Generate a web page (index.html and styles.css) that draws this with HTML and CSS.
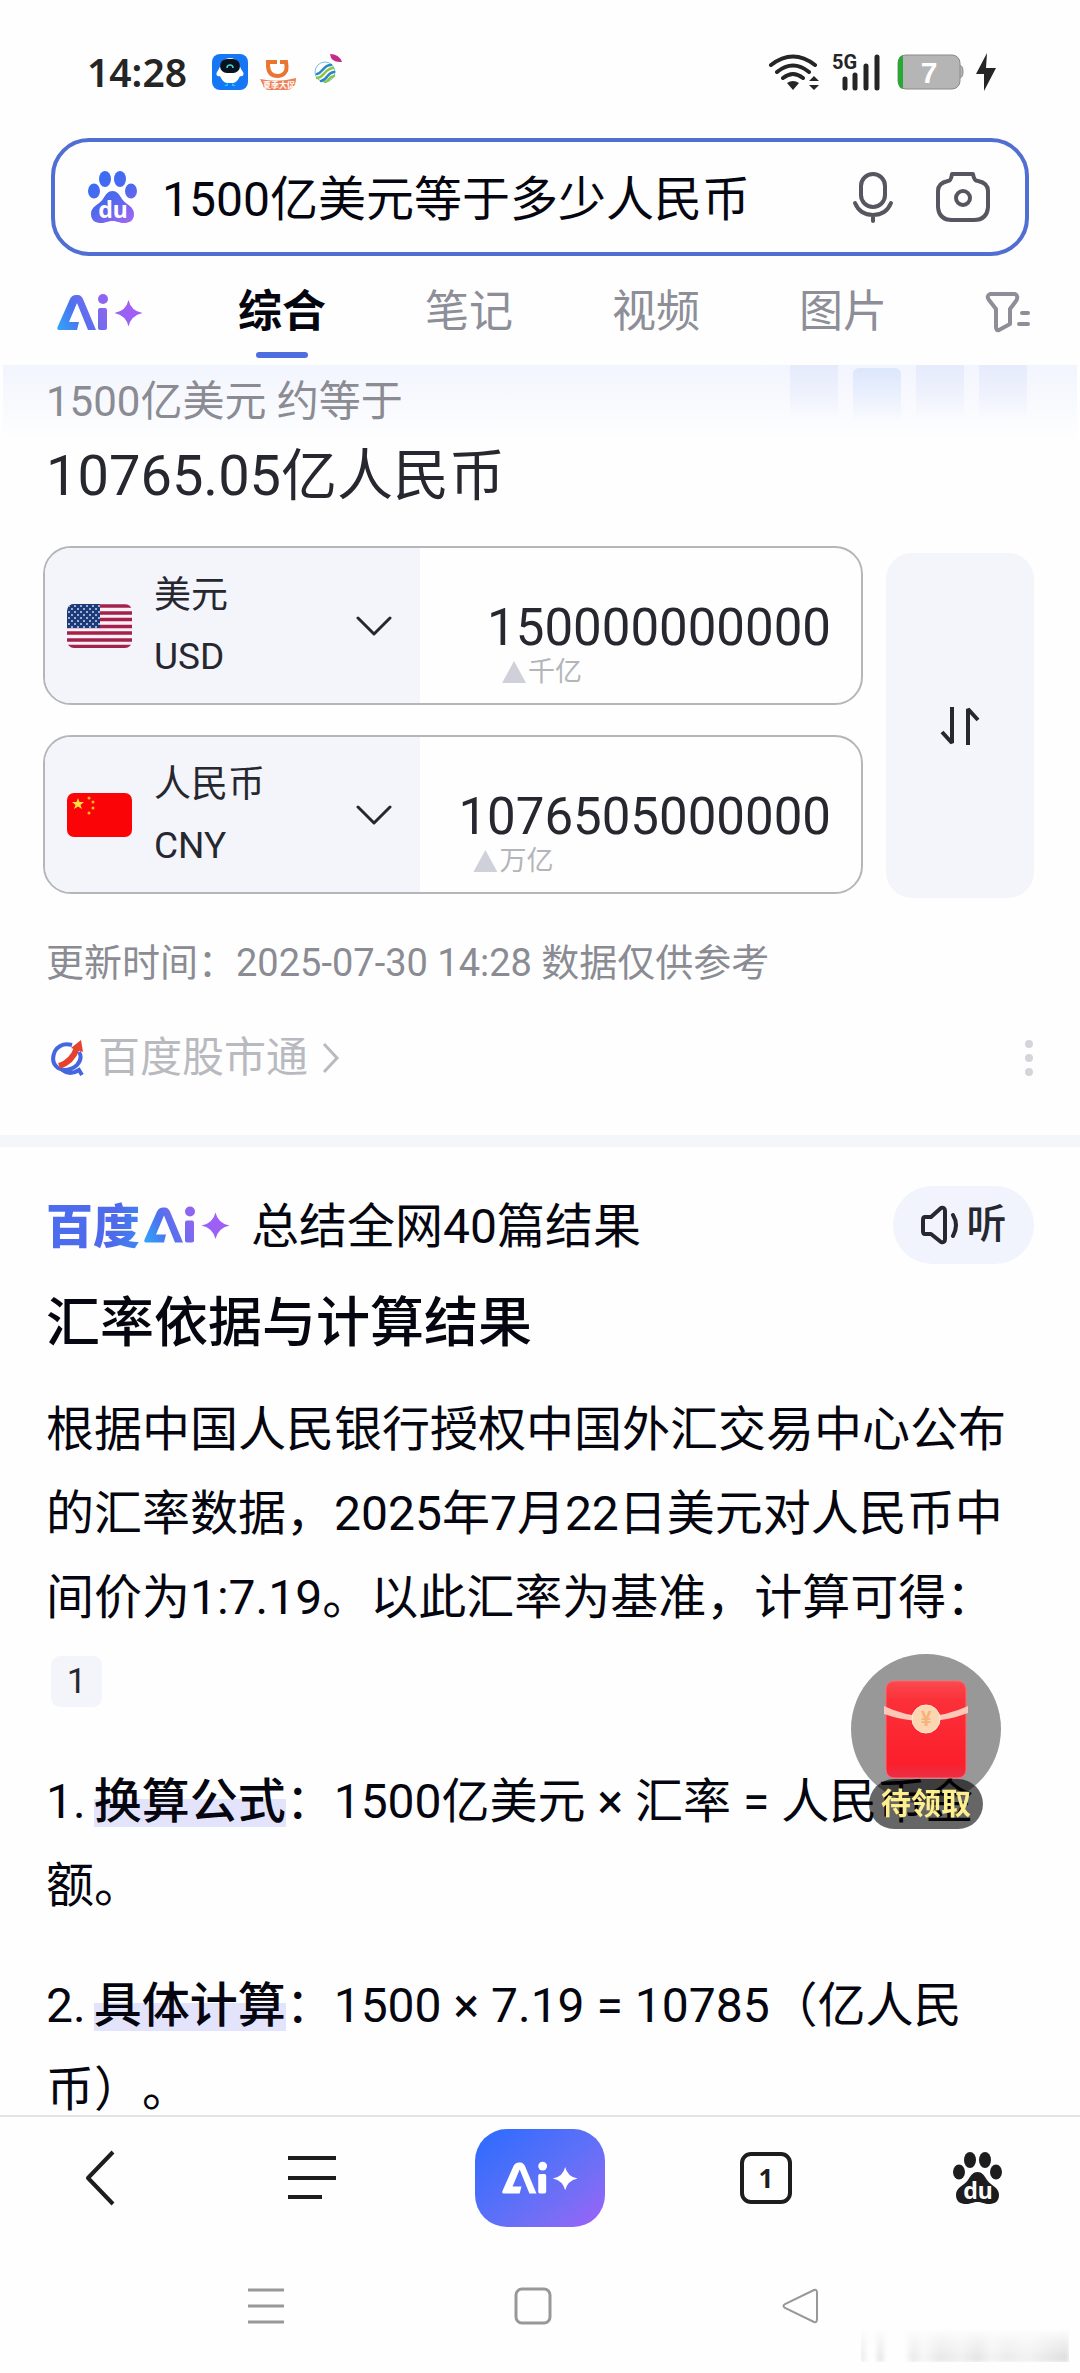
FILE: index.html
```html
<!DOCTYPE html>
<html lang="zh-CN">
<head>
<meta charset="utf-8">
<meta name="viewport" content="width=device-width, initial-scale=1">
<title>1500亿美元等于多少人民币</title>
<link rel="stylesheet" href="styles.css">
</head>
<body>
<svg class="defs" aria-hidden="true">
  <defs>
    <linearGradient id="brand" gradientUnits="userSpaceOnUse" x1="0" y1="36" x2="70" y2="0">
      <stop offset="0" stop-color="#2fa8fb"/><stop offset=".3" stop-color="#4c72ee"/><stop offset=".65" stop-color="#8a67ee"/><stop offset="1" stop-color="#a45df8"/>
    </linearGradient>
    <linearGradient id="pawFill" gradientUnits="userSpaceOnUse" x1="10" y1="5" x2="40" y2="52">
      <stop offset="0" stop-color="#3a6cf5"/><stop offset=".5" stop-color="#5068ec"/><stop offset="1" stop-color="#a066f5"/>
    </linearGradient>
    <symbol id="ai" viewBox="0 0 86 37">
      <path d="M2 36Q-1 36 1 32L13 5Q15 1 19 1H21Q24 1 26 5L39 36H31L20 9L12 28H22L20 36Z"/>
      <circle cx="46" cy="5" r="5"/><rect x="41" y="14" width="9" height="22" rx="2"/>
      <path d="M71.500 6Q74 17 85.500 19Q74 21.500 71.500 32.500Q69 21.500 57.500 19Q69 17 71.500 6Z"/>
    </symbol>
    <symbol id="paw" viewBox="0 0 50 52">
      <ellipse cx="6" cy="20" rx="6" ry="7.500"/><ellipse cx="17" cy="8" rx="6" ry="8"/>
      <ellipse cx="32" cy="8" rx="6" ry="8"/><ellipse cx="43" cy="20" rx="6" ry="7.500"/>
      <path d="M24.500 20C29 20 31 23 34 28C38 34 46 35 46 43C46 50 41 52 36 52C31 52 29 50 24.500 50C20 50 18 52 13 52C8 52 3 50 3 43C3 35 11 34 15 28C18 23 20 20 24.500 20Z"/>
      <text class="du" x="25" y="47" text-anchor="middle">du</text>
    </symbol>
    <pattern id="stars" width="6" height="6" patternUnits="userSpaceOnUse">
      <circle cx="2" cy="2" r="1" fill="#c9d6f2"/><circle cx="5" cy="5" r="1" fill="#c9d6f2"/>
    </pattern>
    <linearGradient id="packet" x1="0" y1="0" x2="0" y2="1">
      <stop offset="0" stop-color="#fb4a50"/><stop offset=".2" stop-color="#fb3038"/><stop offset=".85" stop-color="#fb1f2c"/><stop offset="1" stop-color="#e92f48"/>
    </linearGradient>
  </defs>
</svg>

<header>
  <div class="status">
    <time class="clock">14:28</time>
    <svg class="app" viewBox="0 0 36 36" aria-hidden="true"><rect width="36" height="36" rx="8" fill="#1677f5"/><path d="M18 4C27 4 27 13 31 18C33 22 29 23 28 22C25 29 22 29 18 29C14 29 11 29 8 22C7 23 3 22 5 18C9 13 9 4 18 4Z" fill="#fff"/><rect x="8" y="5" width="20" height="14" rx="7" fill="#09121f"/><path d="M15 14A3 3 0 0 1 21 14" fill="none" stroke="#3fd8d0" stroke-width="1.500"/><path d="M12 32L16 29V32ZM24 32L20 29V32Z" fill="#18c8f8"/></svg>
    <svg class="app" viewBox="0 0 36 36" aria-hidden="true"><path d="M8 8H26Q27 14 26 17Q23 22 18 22Q8 22 8 11Z" fill="none" stroke="#ea7430" stroke-width="4"/><rect x="17" y="6" width="3" height="6" fill="#fff"/><path d="M0 25Q18 29 36 24Q36 36 26 36H10Q3 36 3 31Z" fill="#ee8359"/><text class="app-label" x="19" y="34" text-anchor="middle">夏季大促</text></svg>
    <svg class="app" viewBox="0 0 36 36" aria-hidden="true"><g fill="none" stroke-linecap="round" stroke-width="2.500"><circle cx="17" cy="18" r="10" stroke="#75bfe2" stroke-width="1"/><path d="M9 20C15 19 15 11 23 11M13 27C21 25 18 19 26 18" stroke="#2b86c8"/><path d="M9 24C17 23 16 15 25 14M17 28C22 27 20 23 26 22" stroke="#8ac643"/></g><path d="M22 0Q31 0 34 8Q23 9 22 0Z" fill="#c32d86"/></svg>
    <span class="spacer"></span>
    <svg width="52" height="38" viewBox="0 0 52 38" aria-label="Wi-Fi"><g fill="none" stroke="#252525" stroke-width="4" stroke-linecap="round"><path d="M3 12Q25-5 47 12M9 19Q25 6 41 19M15 25Q25 17 35 25"/></g><path d="M19 30Q25 26 31 30L25 37ZM41 28H51L46 23ZM41 32H51L46 37Z" fill="#252525"/></svg>
    <svg class="signal" width="49" height="38" viewBox="0 0 49 38" aria-label="5G"><text class="net" x="0" y="16">5G</text><path d="M13 26V35M23 22V35M34 13V35M45 4V35" stroke="#252525" stroke-width="5" stroke-linecap="round"/></svg>
    <svg class="battery" width="67" height="36" viewBox="0 0 67 36" aria-label="7%"><path d="M62 11Q66 11 66 18Q66 24 62 24Z" fill="#b5b5b5" stroke="#8a8a8a"/><rect x="1" y="1" width="62" height="34" rx="8" fill="#b5b5b5" stroke="#8a8a8a"/><path d="M6 1V35Q1 34 1 27V9Q1 2 6 1Z" fill="#2aa834"/><text class="charge" x="32" y="29" text-anchor="middle">7</text></svg>
    <svg width="24" height="38" viewBox="0 0 24 38" aria-hidden="true"><path d="M13 0L2 21H10V38L22 15H12Z" fill="#252525"/></svg>
  </div>

  <form class="search" role="search">
    <svg width="50" height="52" fill="url(#pawFill)" aria-hidden="true"><use href="#paw"/></svg>
    <input class="query" type="text" aria-label="搜索" value="1500亿美元等于多少人民币">
    <button class="plain" type="button" aria-label="语音"><svg width="42" height="52" viewBox="0 0 42 52" fill="none" stroke="#55565f" stroke-width="4" stroke-linecap="round"><rect x="9" y="3" width="24" height="33" rx="12"/><path d="M3 32Q8 44 21 44Q34 44 39 32M21 44V50"/></svg></button>
    <button class="plain" type="button" aria-label="拍照"><svg width="54" height="52" viewBox="0 0 54 52" fill="none" stroke="#55565f" stroke-width="4" stroke-linejoin="round"><path d="M16 3H37Q38 10 42 10Q52 12 52 20V36Q51 49 38 49H16Q3 49 2 36V20Q2 12 12 10Q15 10 16 3Z"/><circle cx="27" cy="27" r="7"/></svg></button>
  </form>

  <nav class="tabs" aria-label="搜索分类">
    <a class="tab-ai" href="#ai-answer" aria-label="Ai"><svg width="86" height="37" fill="url(#brand)"><use href="#ai"/></svg></a>
    <a class="tab current" href="#all">综合</a>
    <a class="tab" href="#notes">笔记</a>
    <a class="tab" href="#video">视频</a>
    <a class="tab" href="#images">图片</a>
    <button class="plain filter" type="button" aria-label="筛选"><svg width="46" height="42" viewBox="0 0 46 42" fill="none" stroke="#8d8e98" stroke-width="4" stroke-linecap="round" stroke-linejoin="round"><path d="M5 3H30Q34 5 31 10L25 18V33L14 39Q11 40 11 36V18L4 9Q1 5 5 3ZM37 22H43M34 33H43"/></svg></button>
  </nav>
</header>

<main>
  <section class="rate" id="all">
    <div class="glow" aria-hidden="true"><i></i><i></i><i></i><i></i></div>
    <p class="asked">1500亿美元 约等于</p>
    <p class="result">10765.05亿人民币</p>
    <div class="converter">
      <div class="rows">
        <div class="money">
          <button class="currency" type="button" aria-haspopup="listbox">
            <svg class="flag" viewBox="0 0 65 44" aria-hidden="true"><path fill="#fdf0f5" d="M0 0H65V44H0z"/><path d="M0 2H65M0 9H65M0 15.500H65M0 22.500H65M0 29H65M0 36H65M0 42.500H65" stroke="#a3214d" stroke-width="3.500"/><path fill="#1c3b78" d="M0 0H33V24H0z"/><path fill="url(#stars)" d="M0 0H33V24H0z"/></svg>
            <span class="names"><span>美元</span><span>USD</span></span>
            <svg width="36" height="20" viewBox="0 0 36 20" fill="none" stroke="#26272f" stroke-width="3" stroke-linecap="round" stroke-linejoin="round" aria-hidden="true"><path d="M2 2L18 18L34 2"/></svg>
          </button>
          <div class="amount"><div class="figure">
            <input type="text" inputmode="decimal" aria-label="美元金额" value="150000000000" style="width:12ch">
            <span class="unit">千亿</span>
          </div></div>
        </div>
        <div class="money">
          <button class="currency" type="button" aria-haspopup="listbox">
            <svg class="flag" viewBox="0 0 65 44" aria-hidden="true"><path fill="#fb0407" d="M0 0H65V44H0z"/><path fill="#ffe13a" d="M11 5L12.500 9H17L13.500 12L15 16L11 13.500L7 16L8.500 12L5 9H9.500z"/><g fill="#ffb52a"><circle cx="22" cy="5" r="1.500"/><circle cx="26" cy="9" r="1.500"/><circle cx="26" cy="15" r="1.500"/><circle cx="22" cy="20" r="1.500"/></g></svg>
            <span class="names"><span>人民币</span><span>CNY</span></span>
            <svg width="36" height="20" viewBox="0 0 36 20" fill="none" stroke="#26272f" stroke-width="3" stroke-linecap="round" stroke-linejoin="round" aria-hidden="true"><path d="M2 2L18 18L34 2"/></svg>
          </button>
          <div class="amount"><div class="figure">
            <input type="text" inputmode="decimal" aria-label="人民币金额" value="1076505000000" style="width:13ch">
            <span class="unit">万亿</span>
          </div></div>
        </div>
      </div>
      <button class="swap" type="button" aria-label="互换"><svg width="40" height="40" viewBox="0 0 40 40" fill="none" stroke="#26272f" stroke-width="4"><path d="M12 1V37L2 26M28 39V3L38 14" stroke-linejoin="bevel"/></svg></button>
    </div>
    <p class="updated">更新时间：2025-07-30 14:28 数据仅供参考</p>
    <div class="source">
      <a class="source-link" href="#stocks">
        <svg width="34" height="38" viewBox="0 0 34 38" fill="none" aria-hidden="true"><path d="M22 6Q11 3 5 12Q0 23 8 29Q18 34 27 26Q33 19 29 13M12 31Q20 37 29 31L32 36" stroke="#4467df" stroke-width="4"/><path d="M9 27Q22 23 27 9" stroke="#e6402f" stroke-width="6"/><path d="M21 9L31 1L33 13Z" fill="#e6402f"/></svg>
        <span>百度股市通</span>
        <svg width="18" height="32" viewBox="0 0 18 32" fill="none" stroke="#b9bac0" stroke-width="3" aria-hidden="true"><path d="M2 2L15 16L2 30"/></svg>
      </a>
      <button class="plain more" type="button" aria-label="更多"><svg width="10" height="38" viewBox="0 0 10 38" fill="#d4d5da"><circle cx="5" cy="5" r="4"/><circle cx="5" cy="19" r="4"/><circle cx="5" cy="33" r="4"/></svg></button>
    </div>
  </section>

  <article class="answer" id="ai-answer">
    <div class="answer-head">
      <span class="brand">百度</span>
      <svg width="86" height="40" fill="url(#brand)" aria-label="Ai"><use href="#ai"/></svg>
      <span class="summary">总结全网40篇结果</span>
      <button class="listen" type="button"><svg width="40" height="40" viewBox="0 0 40 40" fill="none" stroke="#26272f" stroke-width="4" stroke-linejoin="round" stroke-linecap="round" aria-hidden="true"><path d="M4 12H10L20 3Q24 2 24 6V34Q24 38 20 37L10 29H4Q2 29 2 26V15Q2 12 4 12ZM32 10Q38 20 32 31"/></svg>听</button>
    </div>
    <h1>汇率依据与计算结果</h1>
    <p>根据中国人民银行授权中国外汇交易中心公布的汇率数据，2025年7月22日美元对人民币中间价为1:7.19。以此汇率为基准，计算可得：<a class="cite" href="#ref-1">1</a></p>
    <p><span class="num">1.</span><strong>换算公式</strong>：1500亿美元 × 汇率 = 人民币金额。</p>
    <p><span class="num">2.</span><strong>具体计算</strong>：1500 × 7.19 = 10785（亿人民币）。</p>
  </article>
</main>

<button class="reward" type="button">
  <svg class="packet" width="150" height="150" viewBox="0 0 150 150" aria-hidden="true"><circle cx="75" cy="75" r="75" fill="#000" fill-opacity=".4"/><rect x="35" y="27" width="80" height="97" rx="8" fill="url(#packet)" stroke="#fd6a70"/><path d="M33 52Q74 72 117 52V59Q75 75 33 60Z" fill="#fdc8b8"/><circle cx="75" cy="65" r="14" fill="#fbd6b0" stroke="#fdebd8"/><text class="yuan" x="75" y="72" text-anchor="middle">¥</text></svg>
  <span class="claim">待领取</span>
</button>

<footer class="dock">
  <nav class="toolbar" aria-label="工具栏">
    <button class="plain" type="button" aria-label="后退"><svg width="32" height="60" viewBox="0 0 32 60" fill="none" stroke="#1d1d1f" stroke-width="4" stroke-linejoin="round"><path d="M29 4L4 30L29 56"/></svg></button>
    <button class="plain" type="button" aria-label="菜单"><svg width="48" height="48" viewBox="0 0 48 48" stroke="#1d1d1f" stroke-width="4"><path d="M0 4H48M0 24H48M0 43H34"/></svg></button>
    <button class="ai-button" type="button" aria-label="Ai"><svg width="76" height="36" fill="#fff"><use href="#ai"/></svg></button>
    <button class="windows" type="button" aria-label="窗口">1</button>
    <button class="plain" type="button" aria-label="首页"><svg width="50" height="52" fill="#1d1d1f"><use href="#paw"/></svg></button>
  </nav>
  <nav class="system" aria-label="系统导航">
    <button class="plain" type="button" aria-label="最近任务"><svg width="38" height="38" viewBox="0 0 38 38" stroke="#989898" stroke-width="3"><path d="M1 3H37M1 19H37M1 35H37"/></svg></button>
    <button class="plain" type="button" aria-label="主屏幕"><svg width="38" height="38" viewBox="0 0 38 38" fill="none" stroke="#989898" stroke-width="3"><rect x="2" y="2" width="34" height="34" rx="6"/></svg></button>
    <button class="plain" type="button" aria-label="返回"><svg width="38" height="38" viewBox="0 0 38 38" fill="none" stroke="#989898" stroke-width="2"><path d="M33 3Q36 2 36 6V32Q36 36 33 35L4 21Q1 19 4 17Z"/></svg></button>
  </nav>
  <div class="smudge" aria-hidden="true"></div>
</footer>
</body>
</html>
```

FILE: styles.css
```css
* { box-sizing: border-box; }
body {
  margin: 0;
  background: #fefefe;
  color: #05060f;
  font-family: Roboto, "Noto Sans CJK SC", sans-serif;
  text-spacing-trim: space-all;
}
p, h1 { margin: 0; }
svg { display: block; flex: none; }
a { color: inherit; text-decoration: none; }
button, input { font: inherit; color: inherit; border: 0; padding: 0; background: none; }
.plain { display: flex; align-items: center; justify-content: center; }
.defs { position: absolute; width: 0; height: 0; }
.du { font: 700 23px "Noto Sans", sans-serif; fill: #fefefe; }

/* Status bar */
.status {
  display: flex;
  align-items: center;
  height: 138px;
  padding: 6px 82px 0 87px;
}
.clock { margin-right: 12px; font: 600 39px/48px "Noto Sans", sans-serif; color: #252525; width: 113px; }
.app { width: 36px; height: 36px; margin-right: 12px; }
.app-label { font-size: 8px; font-weight: 700; fill: #fff; }
.spacer { flex: 1; }
.signal { margin-left: 12px; }
.net { font-size: 20px; font-weight: 700; fill: #252525; }
.battery { margin: 0 10px 0 16px; }
.charge { font: 700 30px "Liberation Sans", sans-serif; fill: #fff; }

/* Search box */
.search {
  display: flex;
  align-items: center;
  gap: 24px;
  height: 118px;
  margin: 0 51px;
  padding: 0 35px 0 33px;
  border: 4px solid #516ed2;
  border-radius: 38px;
}
.query { flex: 1; min-width: 0; height: 72px; padding-bottom: 4px; font-size: 48px; outline: 0; }
.search .plain + .plain { margin-left: 18px; }

/* Tabs */
.tabs {
  display: flex;
  justify-content: space-between;
  padding: 26px 50px 7px 57px;
  font-size: 44px;
  line-height: 60px;
  color: #8d8e98;
}
.tab-ai, .filter { display: flex; align-items: center; height: 60px; }
.tab-ai { width: 82px; }
.filter { width: 44px; }
.current { color: #05060f; font-weight: 700; }
.tab::after { content: ""; display: block; width: 52px; height: 6px; margin: 10px auto 0; border-radius: 3px; }
.current::after { background: #4e6ee0; }

/* Exchange rate card */
.rate {
  position: relative;
  padding: 9px 46px 47px;
  border-bottom: 12px solid #f5f6fa;
  color: #26272f;
}
.glow {
  position: absolute;
  inset: 0 3px auto;
  z-index: -1;
  display: flex;
  justify-content: flex-end;
  gap: 15px;
  height: 76px;
  padding-right: 50px;
  background: linear-gradient(#f2f5fe, #fefefe);
}
.glow i { width: 48px; height: 54px; background: linear-gradient(#e6ebfc, rgba(240, 243, 254, 0)); }
.glow i:nth-child(2) { margin-top: 3px; border-radius: 6px 6px 0 0; background: linear-gradient(#dde7fc, rgba(240, 243, 254, 0)); }
.asked { font-size: 42px; line-height: 56px; color: #8b8c93; }
.result { margin-top: 10px; font-size: 56px; line-height: 72px; }
.converter { display: flex; gap: 23px; margin: 34px 0 0 -3px; }
.rows { flex: 1; display: grid; gap: 30px; }
.money {
  display: flex;
  height: 159px;
  overflow: hidden;
  border: 2px solid #b5b6ba;
  border-radius: 28px;
}
.currency {
  display: flex;
  align-items: center;
  width: 46%;
  padding: 0 28px 0 22px;
  background: #f4f5fa;
  text-align: left;
}
.flag { width: 65px; height: 44px; border-radius: 7px; }
.names { flex: 1; display: grid; padding-left: 22px; font-size: 37px; line-height: 61px; }
.amount { flex: 1; display: flex; justify-content: flex-end; padding: 48px 30px 0 0; }
.figure { display: flex; flex-direction: column; font-size: 51px; }
.figure input { height: 62px; outline: 0; text-align: right; }
.unit { display: flex; align-items: center; gap: 2px; padding-left: 15px; font-size: 27px; line-height: 28px; color: #b4b5ba; }
.unit::before { content: ""; width: 24px; height: 22px; background: #cfd0da; clip-path: polygon(50% 0, 100% 100%, 0 100%); }
.swap {
  display: flex;
  align-items: center;
  justify-content: center;
  width: 148px;
  margin: 7px 0 -4px;
  border-radius: 26px;
  background: #f4f5fa;
}
.updated { margin-top: 41px; font-size: 38px; line-height: 56px; color: #8b8c93; }
.source { display: flex; justify-content: space-between; margin-top: 37px; }
.source-link { display: flex; align-items: center; gap: 14px; padding-left: 4px; font-size: 42px; line-height: 60px; color: #b9bac0; }

/* AI answer */
.answer { padding: 39px 46px 0; font-size: 48px; line-height: 84px; }
.answer-head { display: flex; align-items: center; height: 78px; line-height: 72px; }
.brand {
  margin-right: 4px;
  padding-top: 4px;
  font-size: 47px;
  font-weight: 900;
  color: transparent;
  background: linear-gradient(100deg, #4a6ef0, #5069ea 70%, #3a8bf5);
  background-clip: text;
}
.summary { flex: 1; margin-left: 21px; padding-top: 4px; }
.listen {
  display: flex;
  align-items: center;
  justify-content: center;
  gap: 6px;
  width: 141px;
  height: 78px;
  border-radius: 39px;
  background: #f1f4fd;
  color: #26272f;
  font-size: 40px;
  font-weight: 500;
}
h1 { margin-top: 24px; font-size: 54px; line-height: 72px; font-weight: 500; }
.answer p { margin-top: 36px; }
.answer h1 + p { margin-top: 28px; }
.cite {
  display: inline-block;
  width: 51px;
  height: 51px;
  margin: 0 0 8px 5px;
  border-radius: 9px;
  background: #f4f5fa;
  color: #26272f;
  font-size: 35px;
  line-height: 51px;
  text-align: center;
  vertical-align: middle;
}
.num { margin-right: 8px; }
strong { font-weight: 500; background: linear-gradient(transparent 45%, #e3e4fb 45%, #e3e4fb 94%, transparent 94%); }

/* Floating reward */
.reward {
  position: fixed;
  right: 79px;
  bottom: 544px;
  display: grid;
  justify-items: center;
  width: 150px;
}
.yuan { font-size: 20px; font-weight: 700; fill: #f4b27c; }
.claim {
  width: 114px;
  margin-top: -25px;
  border-radius: 25px;
  background: rgba(0, 0, 0, .6);
  color: #fdee8e;
  font-size: 30px;
  font-weight: 700;
  line-height: 50px;
}

/* Bottom bars */
.dock { position: fixed; inset: auto 0 0; border-top: 2px solid #e3e3e5; background: #fefefe; }
.toolbar {
  display: grid;
  grid-template-columns: 200fr 224fr 232fr 220fr 204fr;
  align-items: center;
  justify-items: center;
  height: 122px;
}
.ai-button {
  display: grid;
  place-items: center;
  width: 130px;
  height: 98px;
  border-radius: 32px;
  background: linear-gradient(140deg, #2a6bff, #5c70f8 50%, #7a6df5 75%, #a060fb);
}
.windows {
  width: 52px;
  height: 52px;
  border: 4px solid #1d1d1f;
  border-radius: 11px;
  color: #1d1d1f;
  font: 700 26px "Noto Sans", sans-serif;
}
.system {
  display: grid;
  grid-template-columns: repeat(3, 1fr);
  align-items: center;
  justify-items: center;
  height: 134px;
  padding: 0 147px 0 132px;
}
.smudge {
  position: absolute;
  right: 11px;
  bottom: 11px;
  width: 208px;
  height: 34px;
  filter: blur(2px);
  background: linear-gradient(90deg, #ddd, #fefefe 3%, #fefefe 7%, #ddd 9%, #fefefe 12%, #fefefe 21%, #e6e6e6 25%, #f6f6f6 30%, #e4e4e4 38%, #eee 48%, #e0e0e0 56%, #f2f2f2 63%, #e8e8e8 70%, #f0f0f0 80%, #e4e4e4 90%, #d8d8d8);
  mask-image: linear-gradient(transparent, #000);
}
```
